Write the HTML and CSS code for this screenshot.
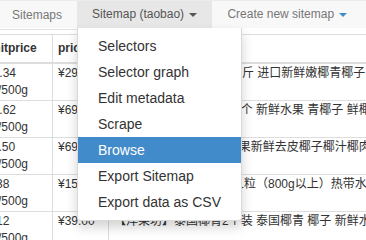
FILE: index.html
```html
<!DOCTYPE html>
<html lang="zh">
<head>
    <meta charset="UTF-8">
    <title>Web Scraper - Browse</title>
    <link rel="stylesheet" href="styles.css">
</head>
<body>
    <nav class="navbar">
        <ul class="nav">
            <li class="tab"><a href="#">Sitemaps</a></li>
            <li class="tab active">
                <a href="#">Sitemap (taobao) <span class="caret"></span></a>
                <ul class="dropdown-menu">
                    <li><a href="#">Selectors</a></li>
                    <li><a href="#">Selector graph</a></li>
                    <li><a href="#">Edit metadata</a></li>
                    <li><a href="#">Scrape</a></li>
                    <li class="selected"><a href="#">Browse</a></li>
                    <li><a href="#">Export Sitemap</a></li>
                    <li><a href="#">Export data as CSV</a></li>
                </ul>
            </li>
            <li class="tab"><a href="#" class="create">Create new sitemap <span class="caret"></span></a></li>
        </ul>
    </nav>

    <div class="data-preview">
        <table class="table">
            <thead>
                <tr>
                    <th class="col-unit">unitprice</th>
                    <th class="col-price">price</th>
                    <th class="col-title">title</th>
                </tr>
            </thead>
            <tbody>
                <tr>
                    <td>23.34<br>元/500g</td>
                    <td>¥29.80</td>
                    <td class="title">【洋果坊】椰青10个约2斤 进口新鲜嫩椰青椰子 热带水果</td>
                </tr>
                <tr>
                    <td>12.62<br>元/500g</td>
                    <td>¥69.00</td>
                    <td class="title">【洋果坊】海南椰青约2个 新鲜水果 青椰子 鲜椰汁 热带水果</td>
                </tr>
                <tr>
                    <td>11.50<br>元/500g</td>
                    <td>¥69.90</td>
                    <td class="title">泰国椰青10个装 热带水果新鲜去皮椰子椰汁椰肉</td>
                </tr>
                <tr>
                    <td>7.38<br>元/500g</td>
                    <td>¥15.80</td>
                    <td class="title">【洋果坊】泰国香椰青 1粒（800g以上）热带水果 新鲜椰子</td>
                </tr>
                <tr>
                    <td>9.12<br>元/500g</td>
                    <td>¥39.00</td>
                    <td class="title">【洋果坊】泰国椰青2个装 泰国椰青 椰子 新鲜水果</td>
                </tr>
            </tbody>
        </table>
    </div>
</body>
</html>
```

FILE: styles.css
```css
* {
    box-sizing: border-box;
}

body {
    margin: 0;
    overflow: hidden;
    font-family: 'Liberation Sans', Arial, 'Noto Sans CJK SC', sans-serif;
    font-size: 14px;
    color: #333;
    background: #fff;
}

a {
    text-decoration: none;
}

/* top navigation */
.navbar {
    height: 28px;
    background: #f8f8f8;
    border-top: 1px solid #ececec;
}

.nav {
    display: flex;
    margin: 0 0 0 -3px;
    padding: 0;
    list-style: none;
}

.tab {
    position: relative;
}

.tab > a {
    display: block;
    padding: 0 15px;
    line-height: 27px;
    font-size: 12px;
    color: #777;
    white-space: nowrap;
}

.tab:first-child > a {
    border-bottom: 1px solid #e2e2e2;
    line-height: 28px;
}

.tab.active > a {
    background: #e7e7e7;
    color: #555;
}

.caret {
    display: inline-block;
    width: 0;
    height: 0;
    margin-left: 2px;
    vertical-align: middle;
    border-top: 4px solid #555;
    border-left: 4px solid transparent;
    border-right: 4px solid transparent;
}

.create .caret {
    border-top-color: #428bca;
}

/* open menu under the active tab */
.dropdown-menu {
    position: absolute;
    top: 27px;
    left: 0;
    z-index: 10;
    min-width: 160px;
    margin: 0;
    padding: 5px 0;
    list-style: none;
    background: #fff;
    border: 1px solid rgba(0, 0, 0, 0.15);
    border-top: none;
    border-radius: 0 0 4px 4px;
    box-shadow: 0 6px 12px rgba(0, 0, 0, 0.175);
}

.dropdown-menu a {
    display: block;
    padding: 3px 20px;
    line-height: 20px;
    color: #333;
    white-space: nowrap;
}

.dropdown-menu .selected a {
    background: #428bca;
    color: #fff;
}

/* scraped data table */
.data-preview {
    overflow: hidden;
    margin-top: 6px;
}

.table {
    width: 900px;
    margin-left: -19px;
    table-layout: fixed;
    border-collapse: separate;
    border-spacing: 0;
    border-top: 1px solid #ddd;
    font-size: 12px;
}

.table th,
.table td {
    padding: 1px 5px;
    line-height: 17px;
    text-align: left;
    vertical-align: top;
    border-right: 1px solid #ddd;
    border-bottom: 1px solid #ddd;
}

.table th {
    padding-top: 5px;
    padding-bottom: 5px;
    font-weight: bold;
    border-bottom-width: 2px;
}

.table td {
    height: 37px;
}

.col-unit {
    width: 72px;
}

.col-price {
    width: 56px;
}

.title {
    white-space: nowrap;
    overflow: hidden;
}
```
